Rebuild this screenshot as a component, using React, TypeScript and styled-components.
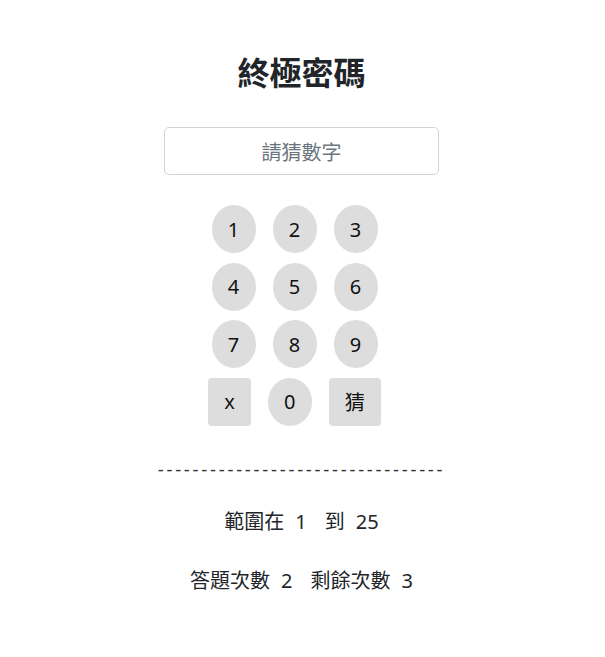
import React from "react";
import styled, { createGlobalStyle } from "styled-components";

const Global = createGlobalStyle`
  body {
    margin: 0;
    background: #ffffff;
    font-family: "Noto Sans", "Noto Sans CJK TC", sans-serif;
    color: #212529;
  }
`;

const Page = styled.main`
  display: flex;
  flex-direction: column;
  align-items: center;
  padding-top: 52px;
  padding-right: 2px;
`;

const Title = styled.h1`
  margin: 0 0 37px;
  font-size: 32px;
  line-height: 38px;
  font-weight: 700;
  color: #212529;
  font-family: "Noto Sans CJK TC", sans-serif;
`;

const GuessInput = styled.input`
  box-sizing: border-box;
  width: 275px;
  height: 48px;
  border: 1px solid #ced4da;
  border-radius: 5px;
  text-align: center;
  font-size: 20px;
  font-family: "Noto Sans CJK TC", sans-serif;
  color: #212529;
  margin-bottom: 30px;
  outline: none;
  &::placeholder {
    color: #6c757d;
  }
`;

const Keypad = styled.div`
  display: flex;
  flex-direction: column;
  gap: 9.5px;
  align-items: center;
  padding-right: 14px;
`;

const KeyRow = styled.div`
  display: flex;
  gap: 17px;
  justify-content: center;
`;

const Key = styled.button<{ $round?: boolean }>`
  height: 48px;
  min-width: ${(p) => (p.$round ? "44px" : "0")};
  padding: 0 16px;
  border: none;
  background: #dddddd;
  border-radius: ${(p) => (p.$round ? "50%" : "4px")};
  font-size: 20px;
  font-family: "Noto Sans", "Noto Sans CJK TC", sans-serif;
  color: #111111;
  display: flex;
  align-items: center;
  justify-content: center;
`;

const Divider = styled.div`
  margin-top: 32.5px;
  font-size: 18px;
  line-height: 24px;
  letter-spacing: 2.72px;
  color: #333;
  font-family: "Liberation Sans", sans-serif;
`;

const InfoRow = styled.div<{ $top: number }>`
  margin-top: ${(p) => p.$top}px;
  display: flex;
  align-items: center;
  gap: 18px;
  font-size: 20px;
  line-height: 28px;
  color: #212529;
  font-family: "Noto Sans", "Noto Sans CJK TC", sans-serif;
`;

const Group = styled.span`
  display: inline-flex;
  align-items: center;
  gap: 11px;
`;

const Num = styled.span``;

const rows = [
  ["1", "2", "3"],
  ["4", "5", "6"],
  ["7", "8", "9"],
];

export default function App() {
  return (
    <Page>
      <Global />
      <Title>終極密碼</Title>
      <GuessInput placeholder="請猜數字" />
      <Keypad>
        {rows.map((r, i) => (
          <KeyRow key={i}>
            {r.map((d) => (
              <Key $round key={d}>
                {d}
              </Key>
            ))}
          </KeyRow>
        ))}
        <KeyRow>
          <Key>x</Key>
          <Key $round>0</Key>
          <Key>猜</Key>
        </KeyRow>
      </Keypad>
      <Divider>{"-".repeat(33)}</Divider>
      <InfoRow $top={26}>
        <Group>
          範圍在<Num>1</Num>
        </Group>
        <Group>
          到<Num>25</Num>
        </Group>
      </InfoRow>
      <InfoRow $top={31}>
        <Group>
          答題次數<Num>2</Num>
        </Group>
        <Group>
          剩餘次數<Num>3</Num>
        </Group>
      </InfoRow>
    </Page>
  );
}
